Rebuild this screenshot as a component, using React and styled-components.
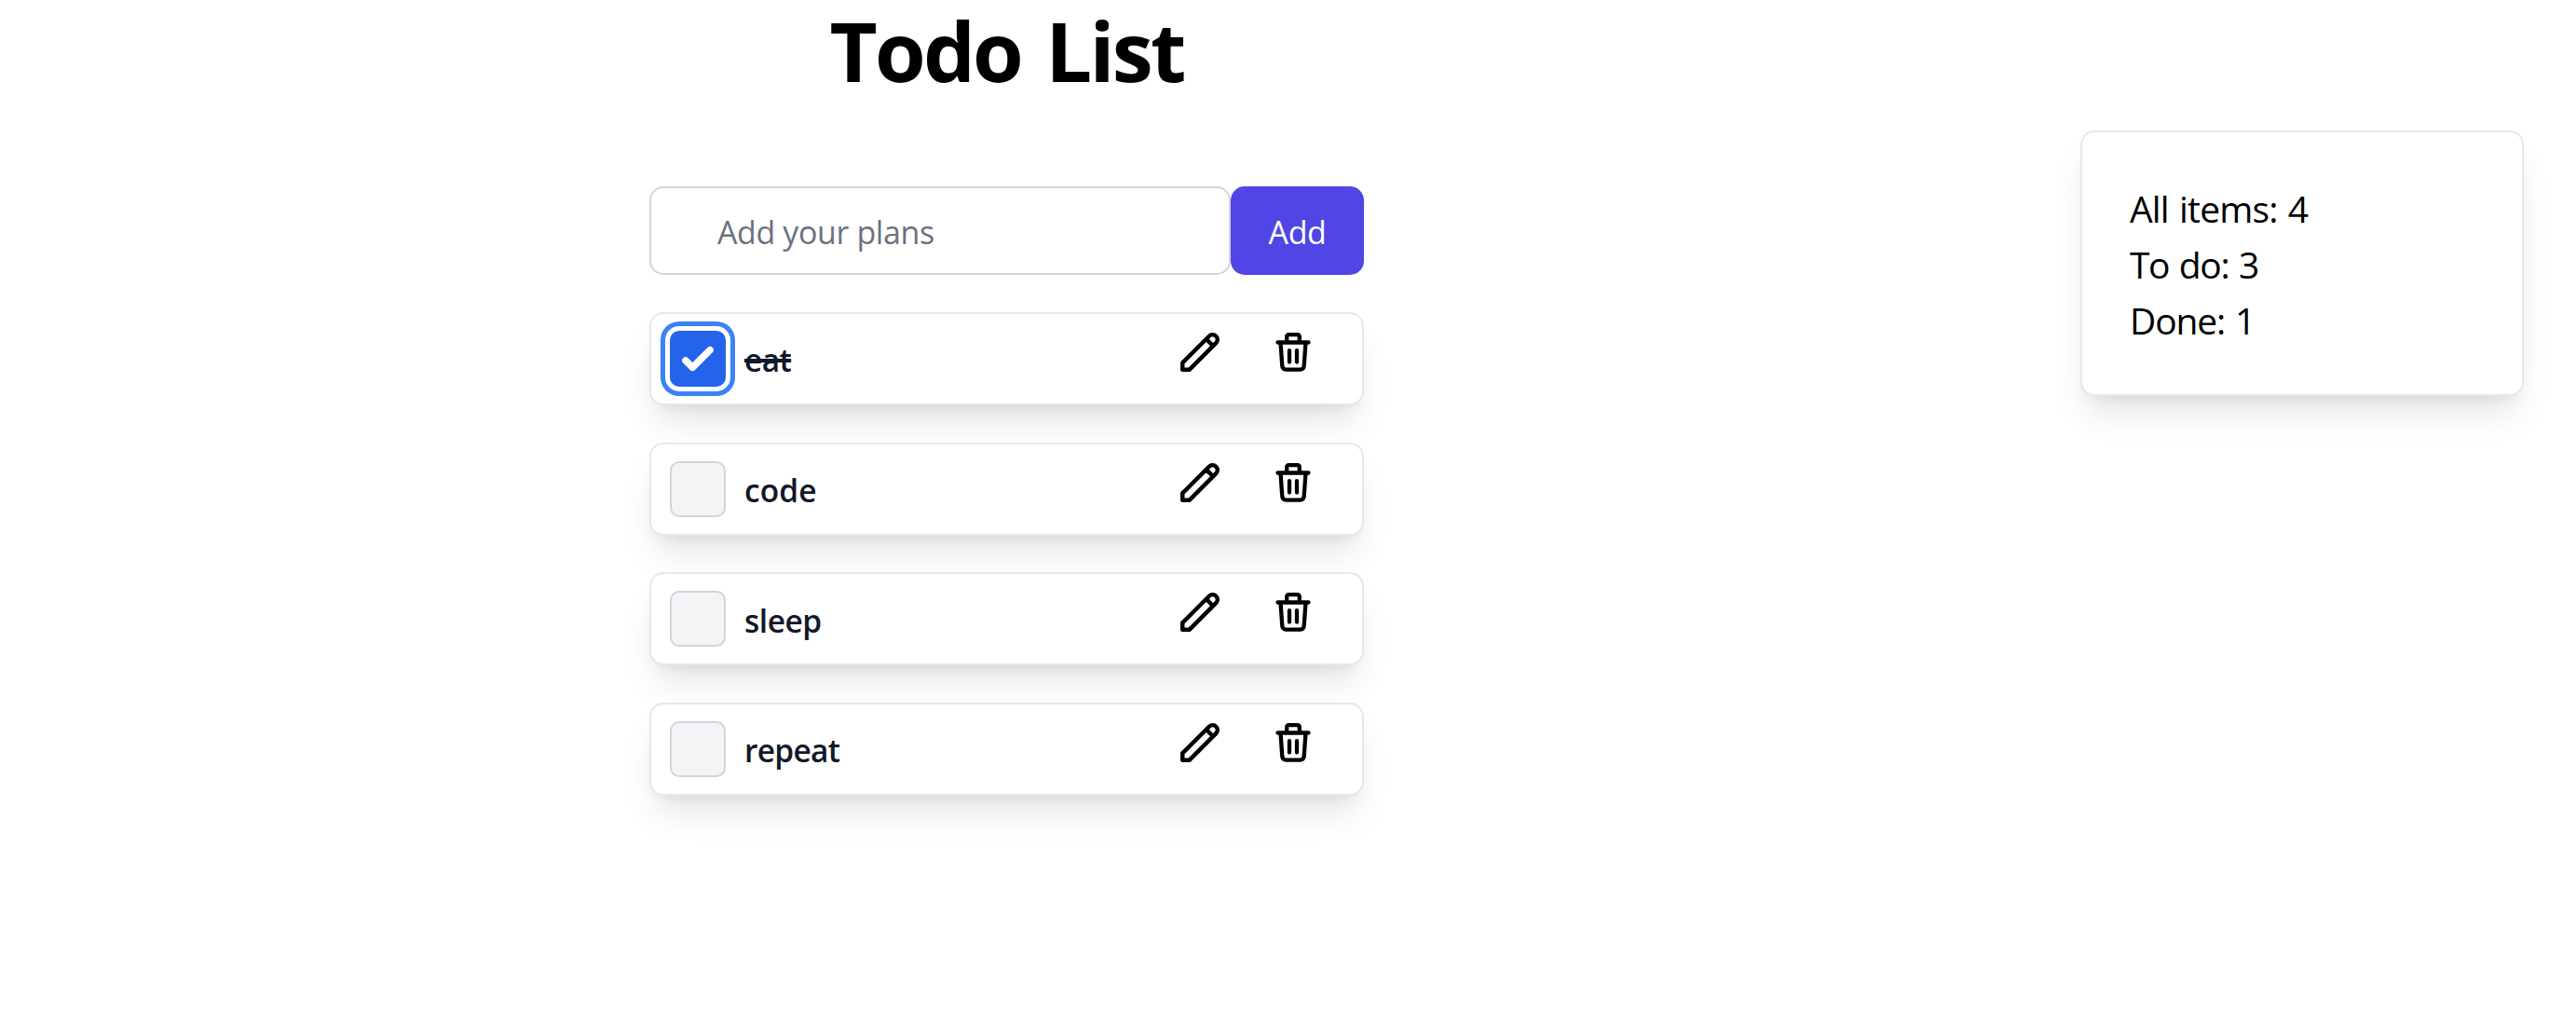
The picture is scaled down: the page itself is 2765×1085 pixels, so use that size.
import React, { useState } from "react";
import styled, { createGlobalStyle, css } from "styled-components";

const GlobalStyle = createGlobalStyle`
  *, *::before, *::after { box-sizing: border-box; }
  body {
    margin: 0;
    background: #fff;
    color: #000;
    font-family: "Open Sans", "Noto Sans", sans-serif;
  }
`;

const cardSurface = css`
  background: #fff;
  border: 2px solid #e5e7eb;
  border-radius: 15px;
  box-shadow: 0 25px 37.5px -7.5px rgba(0, 0, 0, 0.1), 0 10px 15px -10px rgba(0, 0, 0, 0.1);
`;

const Page = styled.main`
  display: flex;
  align-items: flex-start;
  justify-content: space-between;
  height: 1085px;
  padding: 0 56px 0 697px;
`;

const Planner = styled.section`
  width: 767px;
`;

const Title = styled.h1`
  margin: 0;
  padding-top: 4px;
  height: 200px;
  font-size: 88.5px;
  line-height: 100px;
  font-weight: 700;
  letter-spacing: -2.8px;
  word-spacing: 6px;
  text-align: center;
  white-space: nowrap;
`;

const AddForm = styled.form`
  display: flex;
  height: 95px;
  margin-bottom: 40px;
`;

const PlanInput = styled.input`
  flex: 1;
  min-width: 0;
  padding: 3px 0 0 71px;
  border: 2px solid #d1d5db;
  border-radius: 15px;
  background: #fff;
  color: #111827;
  font: 400 34px/50px "Open Sans", sans-serif;
  letter-spacing: -0.4px;
  outline: none;
  &::placeholder { color: #6b7280; opacity: 1; }
`;

const AddButton = styled.button`
  width: 143px;
  padding: 3px 0 0;
  border: 0;
  border-radius: 15px;
  background: #4f46e5;
  color: #fff;
  font: 400 34px/50px "Open Sans", sans-serif;
  letter-spacing: -0.4px;
`;

const List = styled.ul`
  display: grid;
  gap: 39.67px;
  margin: 0;
  padding: 0;
  list-style: none;
`;

const Row = styled.li`
  ${cardSurface}
  display: flex;
  align-items: flex-start;
  height: 100px;
  padding: 18px 49px 0 20px;
`;

const Check = styled.button`
  display: grid;
  place-items: center;
  flex: none;
  width: 60px;
  height: 60px;
  padding: 0;
  border-radius: 10px;
  border: ${(p) => (p.$on ? "0" : "2px solid #d1d5db")};
  background: ${(p) => (p.$on ? "#2563eb" : "#f3f4f6")};
  box-shadow: ${(p) => (p.$on ? "0 0 0 5px #fff, 0 0 0 10px #3b82f6" : "none")};
`;

const Label = styled.span`
  flex: 1;
  padding: 6.2px 0 0 20px;
  color: #111827;
  font-size: 33.5px;
  line-height: 50px;
  font-weight: 600;
  letter-spacing: ${(p) => p.$tracking || 0}px;
  text-decoration: ${(p) => (p.$done ? "line-through 4px" : "none")};
`;

const Actions = styled.div`
  display: flex;
  gap: 50px;
  margin-top: -2px;
`;

const IconButton = styled.button`
  display: flex;
  width: 50px;
  height: 50px;
  padding: 0;
  border: 0;
  background: none;
  color: #000;
`;

const Stats = styled.aside`
  ${cardSurface}
  width: 476px;
  height: 285px;
  margin-top: 140px;
  padding: 51.8px 51px;
  font-size: 39px;
  line-height: 60px;
`;

const Stat = styled.p`
  margin: 0;
  letter-spacing: ${(p) => p.$tracking || 0}px;
  word-spacing: 2px;
`;

const CheckIcon = () => (
  <svg width="60" height="60" viewBox="0 0 16 16" fill="#fff">
    <path d="M12.207 4.793a1 1 0 010 1.414l-5 5a1 1 0 01-1.414 0l-2-2a1 1 0 011.414-1.414L6.5 9.086l4.293-4.293a1 1 0 011.414 0z" />
  </svg>
);

const PencilIcon = () => (
  <svg width="50" height="50" viewBox="0 0 24 24" fill="none" stroke="currentColor" strokeWidth="2.15" strokeLinecap="round" strokeLinejoin="round">
    <path d="M15.232 5.232l3.536 3.536m-2.036-5.036a2.5 2.5 0 113.536 3.536L6.5 21.036H3v-3.572L16.732 3.732z" />
  </svg>
);

const TrashIcon = () => (
  <svg width="50" height="50" viewBox="0 0 50 50" fill="none" stroke="currentColor" strokeWidth="4.3" strokeLinecap="round" strokeLinejoin="round">
    <path d="M8.5 14.5H41.5M11.5 14.5L13.3 39.6A4 4 0 0017.3 43.6H32.7A4 4 0 0036.7 39.6L38.5 14.5M18.2 14.5V8.2A2 2 0 0120.2 6.2H29.8A2 2 0 0131.8 8.2V14.5M21 23.2V35.6M29 23.2V35.6" />
  </svg>
);

export default function App() {
  const [todos, setTodos] = useState([
    { name: "eat", done: true, tracking: -0.6 },
    { name: "code", done: false, tracking: 0.1 },
    { name: "sleep", done: false, tracking: -0.5 },
    { name: "repeat", done: false, tracking: -0.7 },
  ]);
  const toggle = (name) =>
    setTodos(todos.map((t) => (t.name === name ? { ...t, done: !t.done } : t)));
  const doneCount = todos.filter((t) => t.done).length;

  return (
    <>
      <GlobalStyle />
      <Page>
        <Planner>
          <Title>Todo List</Title>
          <AddForm onSubmit={(e) => e.preventDefault()}>
            <PlanInput placeholder="Add your plans" />
            <AddButton type="submit">Add</AddButton>
          </AddForm>
          <List>
            {todos.map((t) => (
              <Row key={t.name}>
                <Check $on={t.done} aria-label={t.name} onClick={() => toggle(t.name)}>
                  {t.done && <CheckIcon />}
                </Check>
                <Label $done={t.done} $tracking={t.tracking}>{t.name}</Label>
                <Actions>
                  <IconButton aria-label="Edit"><PencilIcon /></IconButton>
                  <IconButton aria-label="Delete"><TrashIcon /></IconButton>
                </Actions>
              </Row>
            ))}
          </List>
        </Planner>
        <Stats>
          <Stat $tracking={-0.85}>All items: {todos.length}</Stat>
          <Stat $tracking={-1.4}>To do: {todos.length - doneCount}</Stat>
          <Stat $tracking={-1.15}>Done: {doneCount}</Stat>
        </Stats>
      </Page>
    </>
  );
}
